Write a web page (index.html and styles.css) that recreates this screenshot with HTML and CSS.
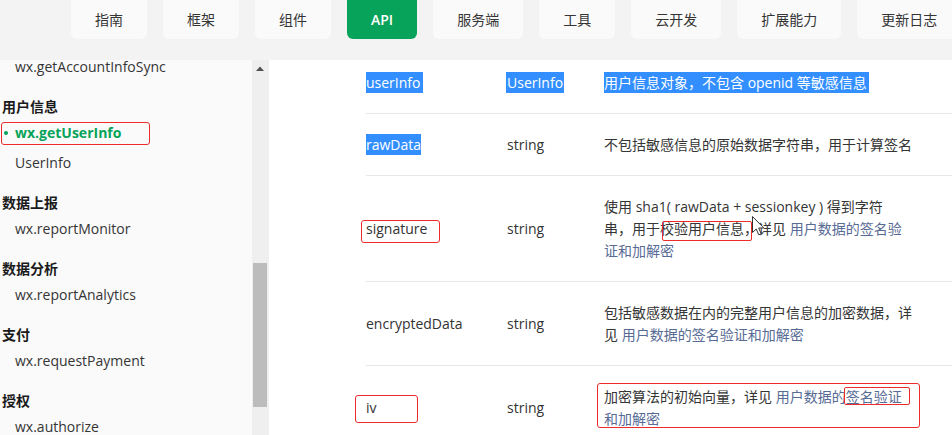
FILE: index.html
```html
<!DOCTYPE html>
<html lang="zh-CN">
<head>
<meta charset="utf-8">
<title>wx.getUserInfo</title>
<link rel="stylesheet" href="styles.css">
</head>
<body>
<header class="topbar">
  <nav class="nav">
    <a class="nav-btn">指南</a>
    <a class="nav-btn">框架</a>
    <a class="nav-btn">组件</a>
    <a class="nav-btn active">API</a>
    <a class="nav-btn">服务端</a>
    <a class="nav-btn">工具</a>
    <a class="nav-btn">云开发</a>
    <a class="nav-btn">扩展能力</a>
    <a class="nav-btn">更新日志</a>
  </nav>
</header>

<div class="page">
  <aside class="sidebar">
    <div class="item">wx.getAccountInfoSync</div>
    <div class="group">
      <div class="heading">用户信息</div>
      <div class="item active"><span class="mark mark-side"></span>wx.getUserInfo</div>
      <div class="item">UserInfo</div>
    </div>
    <div class="group">
      <div class="heading">数据上报</div>
      <div class="item">wx.reportMonitor</div>
    </div>
    <div class="group">
      <div class="heading">数据分析</div>
      <div class="item">wx.reportAnalytics</div>
    </div>
    <div class="group">
      <div class="heading">支付</div>
      <div class="item">wx.requestPayment</div>
    </div>
    <div class="group">
      <div class="heading">授权</div>
      <div class="item">wx.authorize</div>
    </div>
  </aside>

  <div class="scrollbar">
    <svg class="scroll-up" width="8" height="5" viewBox="0 0 8 5"><path d="M0 5 L4 0.5 L8 5 Z" fill="#505050"/></svg>
    <div class="thumb"></div>
  </div>

  <main class="content">
    <div class="row">
      <div class="c-name"><span class="sel sel-name">userInfo</span></div>
      <div class="c-type"><span class="sel sel-type">UserInfo</span></div>
      <div class="c-desc"><span class="sel sel-desc">用户信息对象，不包含 openid 等敏感信息</span></div>
    </div>
    <div class="row">
      <div class="c-name"><span class="sel sel-raw">rawData</span></div>
      <div class="c-type">string</div>
      <div class="c-desc">不包括敏感信息的原始数据字符串，用于计算签名</div>
    </div>
    <div class="row">
      <div class="c-name"><span class="marked">signature<span class="mark mark-sig"></span></span></div>
      <div class="c-type">string</div>
      <div class="c-desc">使用 sha1( rawData + sessionkey ) 得到字符<br>串，用于<span class="marked">校验用户信息，<span class="mark mark-check"></span></span>详见 <span class="link">用户数据的签名验<br>证和加解密</span>
        <svg class="cursor" width="13" height="20" viewBox="0 0 13 20"><path d="M0.5 0.5 L0.5 16.5 L4.2 13 L6.8 18.8 L9.2 17.8 L6.7 12 L11.8 12 Z" fill="#ffffff" stroke="#333333" stroke-width="1" stroke-linejoin="round"/></svg>
      </div>
    </div>
    <div class="row">
      <div class="c-name">encryptedData</div>
      <div class="c-type">string</div>
      <div class="c-desc">包括敏感数据在内的完整用户信息的加密数据，详<br>见 <span class="link">用户数据的签名验证和加解密</span></div>
    </div>
    <div class="row">
      <div class="c-name"><span class="marked">iv<span class="mark mark-iv"></span></span></div>
      <div class="c-type">string</div>
      <div class="c-desc marked-block">加密算法的初始向量，详见 <span class="link">用户数据的<span class="marked">签名验证<span class="mark mark-sign"></span></span><br>和加解密</span><span class="mark mark-desc"></span></div>
    </div>
  </main>
</div>
</body>
</html>
```

FILE: styles.css
```css
* {
  box-sizing: border-box;
}

html, body {
  margin: 0;
  padding: 0;
  height: 100%;
  overflow: hidden;
}

body {
  font-family: "Open Sans", "Noto Sans CJK SC", sans-serif;
  font-size: 14px;
  color: #353535;
  background: #ffffff;
}

/* ---------- top navigation ---------- */
.topbar {
  position: fixed;
  top: 0;
  left: 0;
  right: 0;
  height: 60px;
  background: #f3f3f3;
  z-index: 10;
}

.nav {
  display: flex;
  gap: 16px;
  padding-left: 71px;
  white-space: nowrap;
}

.nav-btn {
  flex: none;
  height: 39px;
  line-height: 39px;
  padding: 0 24px;
  background: #fafafa;
  border-radius: 0 0 6px 6px;
  color: #353535;
  font-size: 14px;
  text-align: center;
}

.nav-btn.active {
  background: #07a35a;
  color: #ffffff;
  font-weight: 600;
}

/* ---------- page layout ---------- */
.page {
  display: grid;
  grid-template-columns: 252px 17px 1fr;
  height: 435px;
}

.sidebar {
  background: #fafafa;
  padding: 52px 0 0 2px;
  overflow: hidden;
}

.group {
  margin-top: 14px;
}

.heading {
  line-height: 22px;
  font-weight: 700;
  color: #1a1a1a;
}

.item {
  position: relative;
  line-height: 30px;
  padding-left: 13px;
  color: #353535;
  white-space: nowrap;
}

.item.active {
  color: #07a35a;
  font-weight: 700;
}

.item.active::before {
  content: "";
  position: absolute;
  left: 2px;
  top: 13px;
  width: 4px;
  height: 4px;
  border-radius: 50%;
  background: #07a35a;
}

/* ---------- fake scrollbar ---------- */
.scrollbar {
  background: #efefef;
  padding-top: 66px;
  display: flex;
  flex-direction: column;
}

.scroll-up {
  display: block;
  margin-left: 4px;
}

.thumb {
  margin-top: 192px;
  margin-left: 1px;
  width: 14px;
  height: 144px;
  background: #bcbcbc;
}

/* ---------- table content ---------- */
.content {
  background: #ffffff;
  padding: 52px 0 0 97px;
  overflow: hidden;
}

.row {
  display: grid;
  grid-template-columns: 141px 97px 1fr;
  align-items: center;
  padding: 20px 0 19px;
  border-bottom: 1px solid #e7e7e7;
  line-height: 22px;
  white-space: nowrap;
}

.c-name,
.c-type {
  color: #333333;
}

.c-desc {
  position: relative;
  color: #353535;
}

.link {
  color: #576b95;
}

.sel {
  display: inline-block;
  line-height: 21px;
  background: #338fff;
  color: #ffffff;
}

.sel-name {
  padding-right: 3px;
}

.sel-type {
  margin-left: -1px;
  padding: 0 1px;
}

.sel-desc {
  padding-right: 2px;
}

/* ---------- red annotation boxes ---------- */
.marked {
  position: relative;
  display: inline-block;
}

.mark {
  position: absolute;
  border: 1px solid #ee2b2b;
  border-radius: 3px;
  pointer-events: none;
}

.mark-side {
  left: -1px;
  top: 4px;
  width: 149px;
  height: 23px;
}

.mark-sig {
  left: -5px;
  top: 2px;
  width: 79px;
  height: 23px;
}

.mark-check {
  left: 2px;
  top: 3px;
  width: 90px;
  height: 20px;
  border-radius: 2px;
}

.mark-iv {
  left: -11px;
  top: -2px;
  width: 63px;
  height: 28px;
}

.mark-sign {
  left: -2px;
  top: 1px;
  width: 66px;
  height: 18px;
  border-radius: 2px;
}

.mark-desc {
  left: -7px;
  top: -3px;
  width: 323px;
  height: 45px;
}

.cursor {
  position: absolute;
  left: 148px;
  top: 20px;
}
```
